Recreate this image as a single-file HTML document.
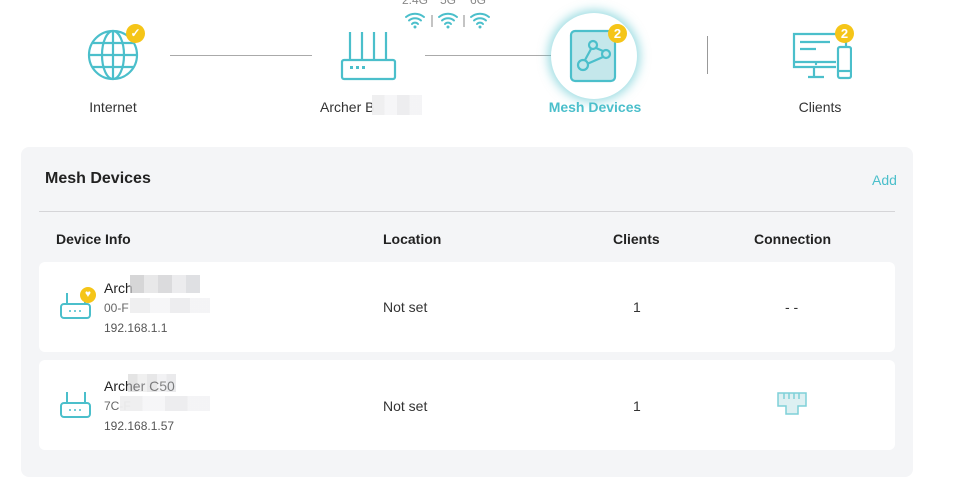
<!DOCTYPE html>
<html><head><meta charset="utf-8"><style>
*{margin:0;padding:0;box-sizing:border-box}
body{width:957px;height:463px;background:#fff;font-family:"Liberation Sans",Arial,sans-serif;position:relative;overflow:hidden;color:#333}
.abs{position:absolute}
.lbl{font-size:14px;color:#333;text-align:center}
.line{position:absolute;height:1px;background:#aaa;top:55px}
.badge{position:absolute;width:19px;height:19px;border-radius:50%;background:#f5c518;color:#fff;font-size:13px;font-weight:bold;text-align:center;line-height:19px}
.panel{position:absolute;left:21px;top:147px;width:892px;height:330px;background:#f4f5f7;border-radius:8px}
.row{position:absolute;left:39px;width:856px;background:#fff;border-radius:6px}
.th{position:absolute;top:231px;font-size:14px;font-weight:bold;color:#222}
.cell{position:absolute;font-size:14px;color:#333}
.blur{position:absolute;background:linear-gradient(90deg,#c8c8ca 0 20%,#e0e0e2 20% 40%,#cfcfd2 40% 60%,#e6e6e8 60% 80%,#d4d6da 80%);opacity:.75}
.blur2{position:absolute;background:linear-gradient(90deg,#eeeeef 0 25%,#f6f6f7 25% 50%,#ececee 50% 75%,#f4f4f5 75%);opacity:.95}
</style></head><body>
<div class="abs" style="left:402px;top:-7px;font-size:12px;color:#888">2.4G</div>
<div class="abs" style="left:440px;top:-7px;font-size:12px;color:#888">5G</div>
<div class="abs" style="left:470px;top:-7px;font-size:12px;color:#888">6G</div>
<svg class="abs" style="left:402px;top:10px" width="92" height="20" viewBox="0 0 92 20">
 <g fill="none" stroke="#4bbfcb" stroke-width="2" stroke-linecap="round">
  <path d="M4 7a14 14 0 0 1 18 0M7 10.5a9 9 0 0 1 12 0M10 14a4 4 0 0 1 6 0"/>
  <path d="M37 7a14 14 0 0 1 18 0M40 10.5a9 9 0 0 1 12 0M43 14a4 4 0 0 1 6 0"/>
  <path d="M69 7a14 14 0 0 1 18 0M72 10.5a9 9 0 0 1 12 0M75 14a4 4 0 0 1 6 0"/>
 </g>
 <g fill="#4bbfcb"><circle cx="13" cy="17" r="1.5"/><circle cx="46" cy="17" r="1.5"/><circle cx="78" cy="17" r="1.5"/></g>
 <path d="M30 5v12M62 5v12" stroke="#888" stroke-width="1"/>
</svg>
<svg class="abs" style="left:83px;top:26px" width="60" height="58" viewBox="0 0 60 58">
 <g fill="none" stroke="#4bbfcb" stroke-width="2.2">
  <circle cx="30" cy="29" r="24"/><ellipse cx="30" cy="29" rx="11" ry="24"/><path d="M30 5v48M6 29h48M10 17h40M10 41h40"/>
 </g>
</svg>
<div class="badge" style="left:126px;top:24px;font-size:12px">✓</div>
<div class="lbl abs" style="left:73px;top:99px;width:80px">Internet</div>
<div class="line" style="left:170px;width:142px"></div>
<svg class="abs" style="left:340px;top:30px" width="58" height="52" viewBox="0 0 58 52">
 <g fill="none" stroke="#4bbfcb" stroke-width="2.2"><rect x="2" y="30" width="53" height="19" rx="2"/><path d="M10 2v28M22 2v28M34 2v28M46 2v28"/></g>
 <g fill="#4bbfcb"><rect x="10" y="36" width="3" height="3"/><rect x="16" y="36" width="3" height="3"/><rect x="22" y="36" width="3" height="3"/></g>
</svg>
<div class="lbl abs" style="left:320px;top:99px;text-align:left">Archer B</div>
<div class="blur2" style="left:372px;top:95px;width:50px;height:20px"></div>
<div class="line" style="left:425px;width:143px"></div>
<div class="abs" style="left:551px;top:13px;width:86px;height:86px;border-radius:50%;background:#fff;box-shadow:0 0 10px 3px rgba(75,191,203,.55)"></div>
<svg class="abs" style="left:569px;top:29px" width="48" height="54" viewBox="0 0 48 54">
 <rect x="2" y="2" width="44" height="50" rx="4" fill="#c4e7eb" stroke="#4bbfcb" stroke-width="2.2"/>
 <g fill="none" stroke="#4bbfcb" stroke-width="2.2"><circle cx="24" cy="16" r="4"/><circle cx="37" cy="25" r="4"/><circle cx="14" cy="36" r="5"/><path d="M22 20l-6 11M27 19l7 3M34 28l-16 7"/></g>
</svg>
<div class="badge" style="left:608px;top:24px">2</div>
<div class="abs" style="left:540px;top:99px;width:110px;text-align:center;font-size:14px;font-weight:bold;color:#4bbfcb">Mesh Devices</div>
<div class="abs" style="left:707px;top:36px;width:1px;height:38px;background:#999"></div>
<svg class="abs" style="left:792px;top:32px" width="60" height="48" viewBox="0 0 60 48">
 <g fill="none" stroke="#4bbfcb" stroke-width="2.2"><path d="M44 35H2V2h52v13"/><path d="M2 30h42M22 35v9M16 45h16M8 10h30M8 17h16"/><rect x="46" y="15" width="13" height="31" rx="2"/><path d="M46 39h13"/></g>
 <circle cx="24" cy="32" r="1.2" fill="#4bbfcb"/>
</svg>
<div class="badge" style="left:835px;top:24px">2</div>
<div class="lbl abs" style="left:780px;top:99px;width:80px">Clients</div>
<div class="panel"></div>
<div class="abs" style="left:45px;top:170px;font-size:16px;font-weight:bold;color:#222">Mesh Devices</div>
<div class="abs" style="left:872px;top:172px;font-size:14px;color:#4bbfcb">Add</div>
<div class="abs" style="left:39px;top:211px;width:856px;height:1px;background:#d5d5d8"></div>
<div class="th" style="left:56px">Device Info</div>
<div class="th" style="left:383px">Location</div>
<div class="th" style="left:613px">Clients</div>
<div class="th" style="left:754px">Connection</div>
<div class="row" style="top:262px;height:90px"></div>
<div class="row" style="top:360px;height:90px"></div>
<svg class="abs" style="left:59px;top:291px" width="34" height="30" viewBox="0 0 34 30">
 <g fill="none" stroke="#4bbfcb" stroke-width="2"><rect x="2" y="13" width="29" height="14" rx="3"/><path d="M8 2v11M26 6v7"/></g>
 <g fill="#4bbfcb"><circle cx="11" cy="20" r="1"/><circle cx="16" cy="20" r="1"/><circle cx="21" cy="20" r="1"/></g>
</svg>
<div class="badge" style="left:80px;top:287px;width:16px;height:16px;line-height:16px;font-size:10px">♥</div>
<div class="cell" style="left:104px;top:280px;color:#222">Arch</div>
<div class="blur" style="left:130px;top:275px;width:70px;height:18px"></div>
<div class="cell" style="left:104px;top:301px;font-size:12px;color:#666">00-F</div>
<div class="blur2" style="left:130px;top:298px;width:80px;height:15px"></div>
<div class="cell" style="left:104px;top:321px;font-size:12px;color:#555">192.168.1.1</div>
<div class="cell" style="left:383px;top:299px">Not set</div>
<div class="cell" style="left:633px;top:299px">1</div>
<div class="cell" style="left:785px;top:299px">- -</div>
<svg class="abs" style="left:59px;top:390px" width="34" height="30" viewBox="0 0 34 30">
 <g fill="none" stroke="#4bbfcb" stroke-width="2"><rect x="2" y="13" width="29" height="14" rx="3"/><path d="M8 2v11M26 2v11"/></g>
 <g fill="#4bbfcb"><circle cx="11" cy="20" r="1"/><circle cx="16" cy="20" r="1"/><circle cx="21" cy="20" r="1"/></g>
</svg>
<div class="cell" style="left:104px;top:378px;color:#222">Archer C50</div>
<div class="blur" style="left:128px;top:374px;width:48px;height:18px;opacity:.5"></div>
<div class="cell" style="left:104px;top:399px;font-size:12px;color:#666">7C-F</div>
<div class="blur2" style="left:120px;top:396px;width:90px;height:15px"></div>
<div class="cell" style="left:104px;top:419px;font-size:12px;color:#555">192.168.1.57</div>
<div class="cell" style="left:383px;top:398px">Not set</div>
<div class="cell" style="left:633px;top:398px">1</div>
<svg class="abs" style="left:777px;top:392px" width="30" height="24" viewBox="0 0 30 24">
 <path d="M1 1h28v13h-8v8h-12v-8h-8z" fill="#ddf0f2" stroke="#7fd0d8" stroke-width="1.5"/>
 <path d="M7 1v6M12 1v6M17 1v6M22 1v6" stroke="#7fd0d8" stroke-width="1.5"/>
</svg>
</body></html>
